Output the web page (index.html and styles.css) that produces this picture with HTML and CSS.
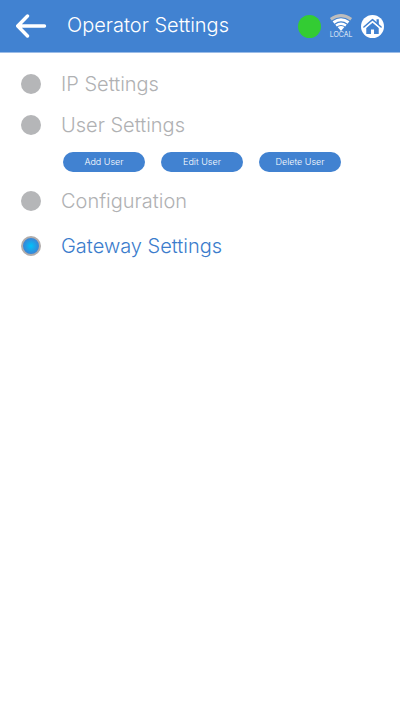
FILE: index.html
```html
<!DOCTYPE html>
<html lang="en">
<head>
<meta charset="utf-8">
<meta name="viewport" content="width=device-width, initial-scale=1">
<title>Operator Settings</title>
<link rel="stylesheet" href="styles.css">
</head>
<body>
<header class="topbar">
  <button class="icon-button" type="button" aria-label="Back">
    <svg width="31" height="26" viewBox="0 0 31 26" fill="none" stroke="#fff" stroke-width="3.4" stroke-linecap="round" stroke-linejoin="round"><path d="M28.500 13H2.500M11.500 3L1.700 13l9.800 10"/></svg>
  </button>
  <h1 class="title">Operator Settings</h1>
  <span class="status" role="img" aria-label="Online"></span>
  <div class="network">
    <svg width="24" height="18" viewBox="0 0 24 18" fill="none" stroke="#fff"><path stroke="#bdbdbd" stroke-width="3" d="M1.800 6.200Q12 -.9 22.200 6.200"/><path stroke-width="3" d="M4.500 9.500Q12 4.100 19.500 9.500"/><path stroke-width="2.400" d="M7 12.500Q12 8.900 17 12.500"/><path fill="#fff" stroke="none" d="M8.600 13.900Q12 11.900 15.400 13.900L12 18z"/></svg>
    <span class="network-label">LOCAL</span>
  </div>
  <button class="icon-button" type="button" aria-label="Home">
    <svg width="23" height="23" viewBox="0 0 24 24"><circle cx="12" cy="12" r="12" fill="#fff"/><path d="M5.500 13.500L12 8l6.500 5.500v6.300h-4.900v-4.600h-3.200v4.600H5.500z" fill="#4182d1"/><path d="M16.200 4.500h2.400v6l-2.400-2z" fill="#4182d1"/><path d="M3 12.500L12 4.800l9 7.700" fill="none" stroke="#4182d1" stroke-width="1.500" stroke-linecap="round" stroke-linejoin="round"/><path d="M4.300 13.600L12 7l7.700 6.600" fill="none" stroke="#fff" stroke-width=".9"/></svg>
  </button>
</header>
<main class="menu">
  <label class="option"><input class="dot" type="radio" name="section"><span>IP Settings</span></label>
  <label class="option"><input class="dot" type="radio" name="section"><span>User Settings</span></label>
  <div class="actions">
    <button class="pill" type="button">Add User</button>
    <button class="pill" type="button">Edit User</button>
    <button class="pill" type="button">Delete User</button>
  </div>
  <label class="option"><input class="dot" type="radio" name="section"><span>Configuration</span></label>
  <label class="option option-last"><input class="dot" type="radio" name="section" checked><span>Gateway Settings</span></label>
</main>
</body>
</html>
```
FILE: styles.css
```css
* { box-sizing: border-box; }

body {
  margin: 0;
  background: #fff;
  font-family: Inter, "Liberation Sans", sans-serif;
  font-weight: 300;
}

button {
  border: 0;
  font: inherit;
  cursor: pointer;
}

svg { display: block; }

.topbar {
  display: flex;
  align-items: center;
  gap: 8px;
  height: 53px;
  padding: 0 16px;
  border-bottom: 1px solid #9bbce7;
  background: #4182d1;
  color: #fff;
}

.icon-button {
  padding: 0;
  background: none;
}

.title {
  flex: 1;
  margin: 0;
  padding: 0 0 2px 12px;
  font-size: 20px;
  font-weight: 300;
  line-height: 28px;
  white-space: nowrap;
}

.status {
  width: 23px;
  height: 23px;
  border-radius: 50%;
  background: #33cc33;
}

.network {
  display: flex;
  flex-direction: column;
  align-items: center;
}

.network-label {
  font-size: 7px;
  line-height: 8px;
}

.menu { padding: 15px 20px; }

.option {
  display: flex;
  align-items: center;
  gap: 20px;
  min-height: 32px;
  margin-bottom: 9px;
  color: #b0b1b3;
  font-size: 20px;
  line-height: 28px;
}

.option:has(:checked) { color: #3b7ccc; }

.option-last { margin-top: 13px; }

.dot {
  appearance: none;
  width: 20px;
  height: 20px;
  margin: 0 0 0 1px;
  border-radius: 50%;
  background: #b5b6b8;
}

.dot:checked {
  border: 2px solid #b0acab;
  background: radial-gradient(circle closest-side, #00c2fa, #3a84d6);
}

.actions {
  display: flex;
  gap: 16px;
  margin: 11px 0 13px;
  padding-left: 43px;
}

.pill {
  width: 82px;
  height: 20px;
  padding: 0;
  border-radius: 10px;
  background: #4182d1;
  color: #fff;
  font-size: 9px;
  line-height: 20px;
}
```
